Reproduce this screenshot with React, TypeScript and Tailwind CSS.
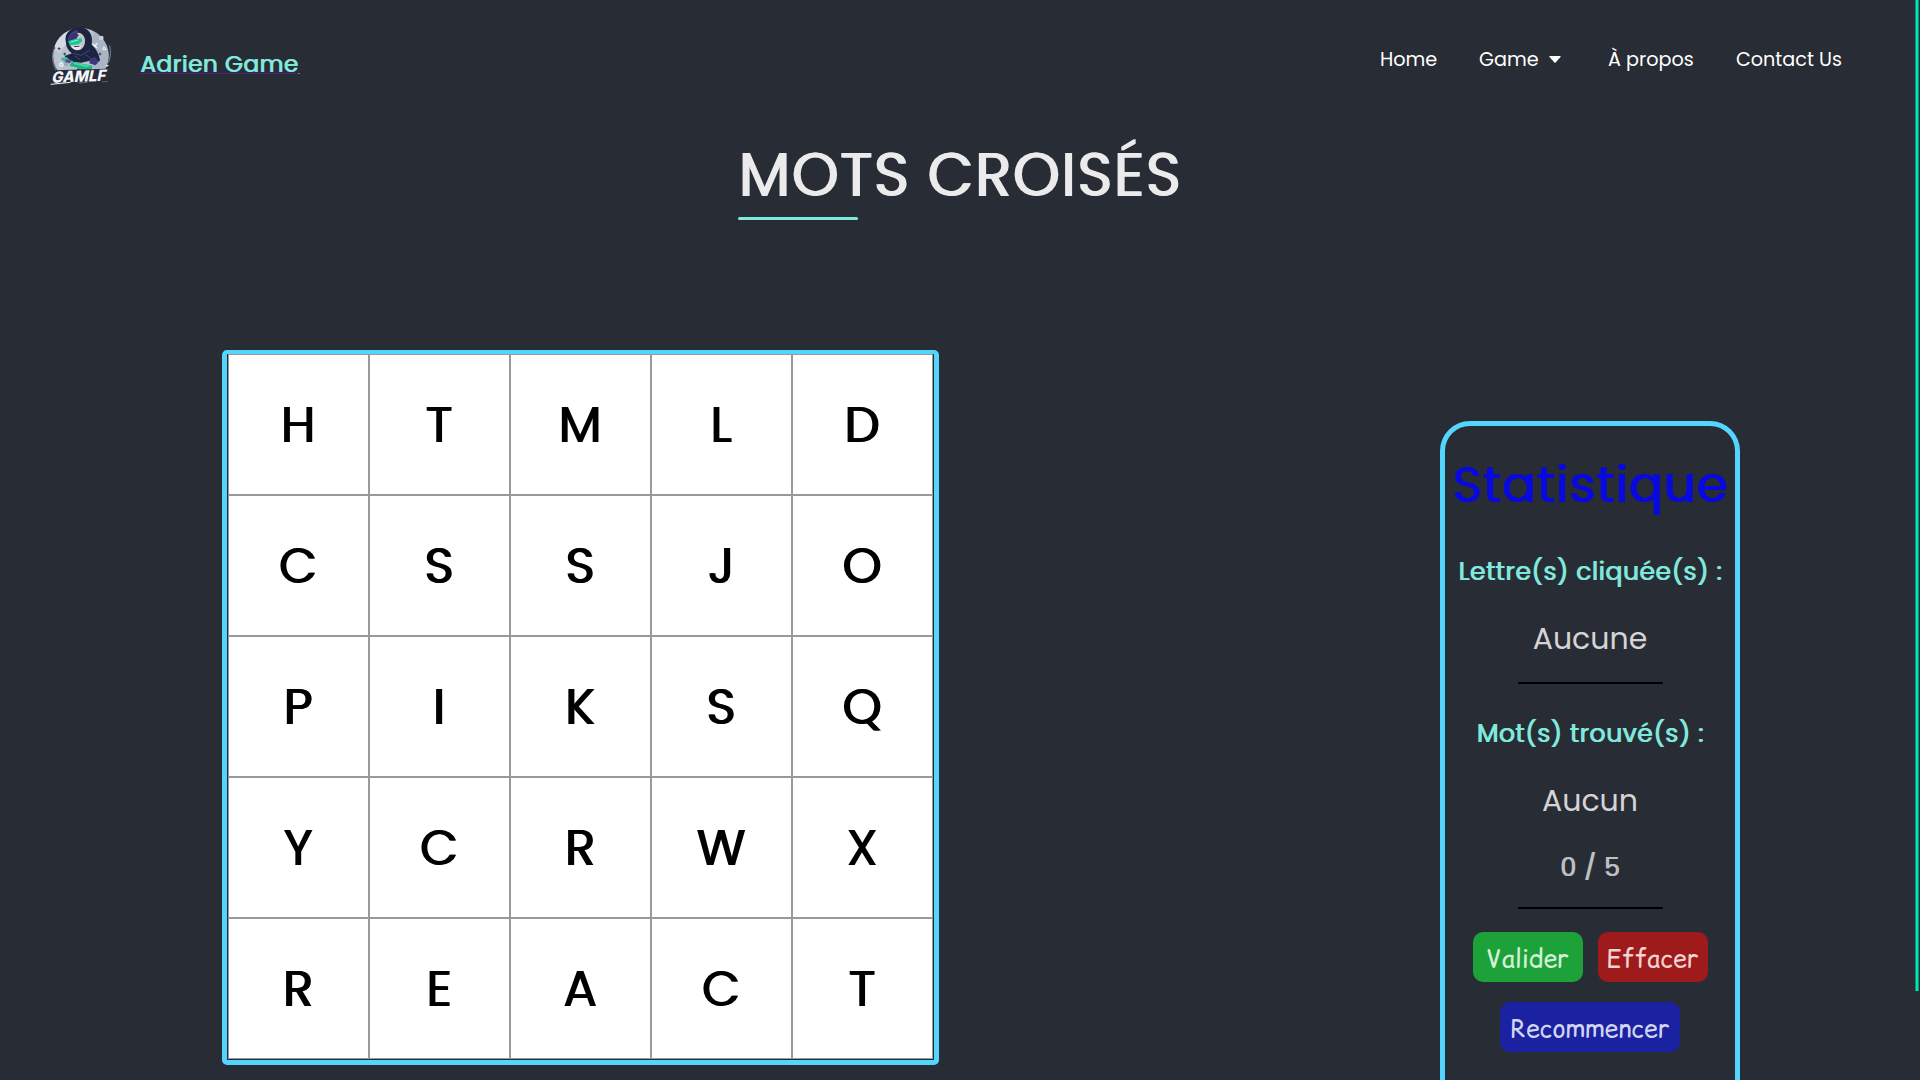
const ROWS = ['HTMLD', 'CSSJO', 'PIKSQ', 'YCRWX', 'REACT'];

function Logo() {
  return (
    <svg viewBox="0 0 222 204" className="h-[68px] w-[74px] shrink-0" aria-hidden="true">
      <circle cx="110" cy="101" r="83" fill="#b9c3d0" />
      <path d="M30 78 A83 83 0 0 1 75 26 L70 60 L46 92 Z" fill="#d3dae3" />
      <path d="M150 30 C196 55 204 105 184 140 L150 148 L140 60 Z" fill="#a9b4c4" />
      <circle cx="172" cy="48" r="7" fill="#c9d1dc" />
      <circle cx="66" cy="124" r="8" fill="#9ba7ba" />
      <g stroke="#eef2f6" strokeWidth="4" fill="none">
        <path d="M146 65 l13 13 M160 64 l-14 14" />
        <circle cx="52" cy="128" r="5" />
        <path d="M180 74 l6 8 -10 1 z" strokeWidth="3" />
        <path d="M186 132 l7 -2" />
      </g>
      <path d="M27 90 Q22 122 38 148 M197 70 Q203 102 193 122" fill="none" stroke="#77849a" strokeWidth="3" />
      <path d="M26 78 h8 M30 74 v8 M45 76 v9 M41 80 h9 M62 92 v8 M58 96 h8 M168 92 v8 M164 96 h8" stroke="#343b4e" strokeWidth="3" />
      <path d="M66 62 C60 40 72 18 108 16 C138 18 148 42 143 68 C156 78 166 98 168 116 L150 124 L138 116 L112 122 L90 120 L66 108 L62 102 L84 94 C72 84 67 76 66 62 Z" fill="#1d2440" />
      <path d="M72 56 C72 40 86 26 102 25 L88 44 Z" fill="#4d459b" />
      <path d="M88 38 C100 28 116 32 122 48 C126 66 118 82 104 85 C88 85 78 76 77 62 Z" fill="#c9c4ca" />
      <path d="M76 44 C86 28 98 28 104 40 L96 52 L74 56 Z" fill="#38356f" />
      <path d="M72 57 L112 48 L115 57 L104 67 L77 70 Z" fill="#16c998" />
      <path d="M80 60 L102 54" stroke="#80f4d2" strokeWidth="3" />
      <path d="M82 74 Q98 68 112 72 L106 82 Q93 87 82 74 Z" fill="#eceaed" />
      <path d="M90 74 L106 73" stroke="#3b3950" strokeWidth="3" />
      <path d="M86 94 L112 100 L138 84 M124 98 L146 112 M92 102 L108 112" fill="none" stroke="#3c4678" strokeWidth="3" />
      <path d="M52 108 L68 105 L78 115 L68 121 L52 114 Z" fill="#3ab98f" />
      <path d="M66 112 L84 116 L78 124 L64 120 Z" fill="#544a94" />
      <path d="M138 110 L154 105 L164 120 L154 130 L136 124 Z" fill="#3e377d" />
      <path d="M84 119 L146 131 L142 146 L76 132 Z" fill="#18b782" />
      <path d="M88 121 L142 132 L128 136 L90 127 Z" fill="#44d6a0" />
      <path d="M100 139 L142 145 L138 152 L96 149 Z" fill="#245761" />
      <path d="M27 145 L190 140 L182 179 L19 186 Z" fill="#252b3b" />
      <text
        x="0"
        y="0"
        transform="translate(22 182) rotate(-2) skewX(-14)"
        textLength="162"
        lengthAdjust="spacingAndGlyphs"
        fill="#f5f6f8"
        fontFamily="Inter, sans-serif"
        fontWeight="800"
        fontSize="46"
      >
        GAMLF
      </text>
      <path d="M20 187 L80 181" stroke="#f5f6f8" strokeWidth="3" />
      <path d="M174 180 l17 -2" stroke="#59627a" strokeWidth="3" />
    </svg>
  );
}

function Header() {
  return (
    <header className="flex h-[116px] shrink-0 items-start justify-between pl-[44px] pr-[72px]">
      <div className="flex pt-[22px]">
        <Logo />
        <a className="ml-[22px] mt-[24px] block text-[23px] leading-[37px] tracking-[0.6px] text-[#80e8dd] underline decoration-[#551a8b] decoration-1 [text-shadow:1px_0_0_#80e8dd]">
          Adrien Game
        </a>
      </div>
      <nav className="flex gap-[42px] whitespace-nowrap pt-[46px] text-[19.2px] leading-[28px] text-white">
        <a className="w-[57px]">Home</a>
        <a className="flex w-[87px] items-start">
          Game
          <svg viewBox="0 0 12 7" className="ml-[10px] mt-[10px] h-[7px] w-[12px]">
            <path d="M0.8 0 H11.2 Q12 0.5 11.5 1.1 L6.6 6.6 Q6 7.1 5.4 6.6 L0.5 1.1 Q0 0.5 0.8 0 Z" fill="#fff" />
          </svg>
        </a>
        <a className="w-[86px]">À propos</a>
        <a className="w-[107px]">Contact Us</a>
      </nav>
    </header>
  );
}

function Board() {
  return (
    <div className="mt-[130px] h-[715px] w-[717px] rounded-[5px] border-[5px] border-t-4 border-[#53d5fd] px-px pb-px">
      <div className="grid grid-cols-5 bg-white">
        {ROWS.join('').split('').map((letter, i) => (
          <div
            key={i}
            className="flex h-[141px] w-[141px] items-center justify-center border border-[#999] bg-white pr-[2px] text-[50px] leading-none text-black [text-shadow:1.4px_0_0_#000]"
          >
            {letter}
          </div>
        ))}
      </div>
    </div>
  );
}

function Stats() {
  return (
    <aside className="mt-[201px] flex h-[700px] w-[300px] flex-col items-center rounded-[30px] border-[5px] border-[#53d5fd] text-center">
      <h2 className="mt-[21px] h-[75px] whitespace-nowrap text-[50px] leading-[75px] tracking-[1px] text-[#0808e0] [text-shadow:1.4px_0_0_#0808e0]">
        Statistique
      </h2>
      <h3 className="mt-[31px] h-[37px] whitespace-nowrap text-[25px] leading-[38px] tracking-[0.58px] text-[#80e8dd] [text-shadow:1px_0_0_#80e8dd]">
        Lettre(s) cliquée(s) :
      </h3>
      <p className="mt-[26px] h-[45px] text-[30px] leading-[45px] text-[#d4d4d6]">Aucune</p>
      <div className="mt-[21px] h-[2px] w-[145px] rounded-full bg-black" />
      <h3 className="mt-[31px] h-[37px] whitespace-nowrap text-[25px] leading-[38px] tracking-[0.58px] text-[#80e8dd] [text-shadow:1px_0_0_#80e8dd]">
        Mot(s) trouvé(s) :
      </h3>
      <p className="mt-[26px] h-[45px] text-[30px] leading-[45px] text-[#d4d4d6]">Aucun</p>
      <p className="mt-[26px] h-[37px] text-[25px] leading-[38px] tracking-[0.7px] text-[#bfbfc1] [text-shadow:1px_0_0_#bfbfc1]">0 / 5</p>
      <div className="mt-[21px] h-[2px] w-[145px] rounded-full bg-black" />
      <div className="mt-[23px] flex gap-[15px] font-['Comic_Relief','Comic_Neue',cursive] text-[25px]">
        <button className="h-[50px] w-[110px] rounded-[10px] bg-[#1da239] pt-1 text-[#d3f0d8]">Valider</button>
        <button className="h-[50px] w-[110px] rounded-[10px] bg-[#9f1a1a] pt-1 text-[#f0d2d2]">Effacer</button>
      </div>
      <button className="mt-[20px] h-[50px] w-[180px] shrink-0 rounded-[10px] bg-[#1a22a2] pt-1 font-['Comic_Relief','Comic_Neue',cursive] text-[25px] text-[#d2d4f0]">
        Recommencer
      </button>
    </aside>
  );
}

export default function App() {
  return (
    <div className="flex h-[1080px] w-[1920px] overflow-hidden bg-[#282c34] font-['Poppins','Inter',sans-serif]">
      <div className="flex w-[1915px] flex-col">
        <Header />
        <div className="ml-[738px] w-[444px]">
          <h1 className="h-[101px] whitespace-nowrap pt-[14px] text-[60px] leading-[90px] tracking-[1.25px] text-[#ebebeb] [text-shadow:1.6px_0_0_#ebebeb]">
            MOTS CROISÉS
          </h1>
          <div className="h-[3px] w-[120px] rounded-full bg-[#80e8dd]" />
        </div>
        <main className="flex justify-between pl-[222px] pr-[175px]">
          <Board />
          <Stats />
        </main>
      </div>
      <div className="h-[991px] w-[4px] border-x border-[#0e8f78] bg-[#00e6b4]" />
    </div>
  );
}
